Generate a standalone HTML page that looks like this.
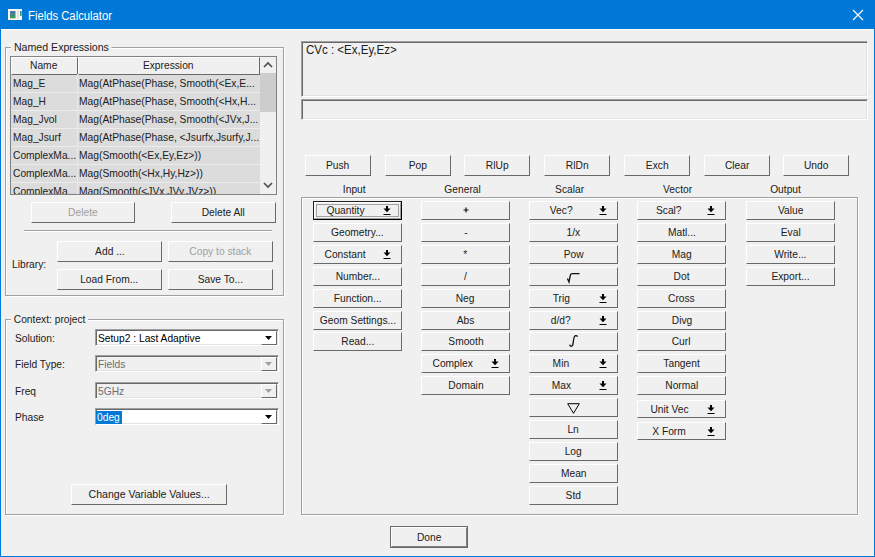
<!DOCTYPE html>
<html><head><meta charset="utf-8"><style>
html,body{margin:0;padding:0;width:875px;height:557px;overflow:hidden;background:#f0f0f0}
body{position:relative;font-family:"Liberation Sans",sans-serif;font-size:11px}
.a{position:absolute;box-sizing:border-box}
.t{position:absolute;white-space:nowrap}
svg.a{display:block}
</style></head><body>
<div class="a" style="left:0px;top:0px;width:875px;height:557px;background:#f0f0f0;"></div>
<div class="a" style="left:0px;top:0px;width:875px;height:29px;background:#0078d7;"></div>
<div class="a" style="left:0px;top:29px;width:1px;height:528px;background:#0078d7;"></div>
<div class="a" style="left:874px;top:29px;width:1px;height:528px;background:#0078d7;"></div>
<div class="a" style="left:0px;top:556px;width:875px;height:1px;background:#0078d7;"></div>
<div class="a" style="left:1px;top:29px;width:873px;height:1px;background:#fff;"></div>
<svg class="a" style="left:8px;top:9px" width="14" height="11" viewBox="0 0 14 11"><defs><linearGradient id="g1" x1="0" y1="0" x2="0" y2="1"><stop offset="0" stop-color="#4a72b0"/><stop offset="1" stop-color="#3aa04a"/></linearGradient></defs><rect x="0" y="0" width="14" height="11" fill="#faf6f2"/><rect x="2" y="2" width="5.5" height="7.3" fill="url(#g1)"/><rect x="9" y="2" width="2" height="7.3" fill="#e2e2e2"/><rect x="12" y="2" width="1.6" height="5" fill="url(#g1)"/></svg>
<div class="t" style="left:28.00px;top:8.8px;font-size:12px;line-height:15px;color:#fff;transform:scaleX(0.94);transform-origin:left;">Fields Calculator</div>
<svg class="a" style="left:852px;top:9px" width="12" height="12" viewBox="0 0 12 12"><path d="M1 1 L11 11 M11 1 L1 11" stroke="#fff" stroke-width="1.1"/></svg>
<div class="a" style="left:6px;top:48px;width:279px;height:249px;border:1px solid #fff;"></div>
<div class="a" style="left:5px;top:47px;width:279px;height:249px;border:1px solid #a0a0a0;"></div>
<div class="t" style="left:14.00px;top:41px;font-size:11px;line-height:13px;color:#202020;transform:scaleX(0.965);transform-origin:left;background:#f0f0f0;padding:0 3px;margin-left:-3px;">Named Expressions</div>
<div class="a" style="left:10px;top:56px;width:267px;height:139px;background:#dcdcdc;border:1px solid #828282;"></div>
<div class="a" style="left:11px;top:57px;width:67px;height:18px;background:#f0f0f0;border-top:1px solid #fff;border-left:1px solid #fff;border-right:1px solid #696969;border-bottom:1px solid #696969;"></div>
<div class="a" style="left:78px;top:57px;width:182px;height:18px;background:#f0f0f0;border-top:1px solid #fff;border-left:1px solid #fff;border-right:1px solid #696969;border-bottom:1px solid #696969;"></div>
<div class="t" style="left:29.33px;top:59px;font-size:11px;line-height:13px;color:#202020;transform:scaleX(0.93);transform-origin:center;">Name</div>
<div class="t" style="left:140.78px;top:59px;font-size:11px;line-height:13px;color:#202020;transform:scaleX(0.93);transform-origin:center;">Expression</div>
<div class="a" style="left:11px;top:74px;width:249px;height:120px;overflow:hidden">
<div class="t" style="left:2.00px;top:2.6999999999999993px;font-size:11px;line-height:13px;color:#202020;transform:scaleX(0.93);transform-origin:left;">Mag_E</div>
<div class="t" style="left:68.00px;top:2.6999999999999993px;font-size:11px;line-height:13px;color:#202020;transform:scaleX(0.935);transform-origin:left;">Mag(AtPhase(Phase, Smooth(&lt;Ex,E...</div>
<div class="a" style="left:0;top:18px;width:249px;height:1px;background:#ececec"></div>
<div class="t" style="left:2.00px;top:20.7px;font-size:11px;line-height:13px;color:#202020;transform:scaleX(0.93);transform-origin:left;">Mag_H</div>
<div class="t" style="left:68.00px;top:20.7px;font-size:11px;line-height:13px;color:#202020;transform:scaleX(0.935);transform-origin:left;">Mag(AtPhase(Phase, Smooth(&lt;Hx,H...</div>
<div class="a" style="left:0;top:36px;width:249px;height:1px;background:#ececec"></div>
<div class="t" style="left:2.00px;top:38.7px;font-size:11px;line-height:13px;color:#202020;transform:scaleX(0.93);transform-origin:left;">Mag_Jvol</div>
<div class="t" style="left:68.00px;top:38.7px;font-size:11px;line-height:13px;color:#202020;transform:scaleX(0.935);transform-origin:left;">Mag(AtPhase(Phase, Smooth(&lt;JVx,J...</div>
<div class="a" style="left:0;top:54px;width:249px;height:1px;background:#ececec"></div>
<div class="t" style="left:2.00px;top:56.7px;font-size:11px;line-height:13px;color:#202020;transform:scaleX(0.93);transform-origin:left;">Mag_Jsurf</div>
<div class="t" style="left:68.00px;top:56.7px;font-size:11px;line-height:13px;color:#202020;transform:scaleX(0.935);transform-origin:left;">Mag(AtPhase(Phase, &lt;Jsurfx,Jsurfy,J...</div>
<div class="a" style="left:0;top:72px;width:249px;height:1px;background:#ececec"></div>
<div class="t" style="left:2.00px;top:74.7px;font-size:11px;line-height:13px;color:#202020;transform:scaleX(0.93);transform-origin:left;">ComplexMa...</div>
<div class="t" style="left:68.00px;top:74.7px;font-size:11px;line-height:13px;color:#202020;transform:scaleX(0.935);transform-origin:left;">Mag(Smooth(&lt;Ex,Ey,Ez&gt;))</div>
<div class="a" style="left:0;top:90px;width:249px;height:1px;background:#ececec"></div>
<div class="t" style="left:2.00px;top:92.7px;font-size:11px;line-height:13px;color:#202020;transform:scaleX(0.93);transform-origin:left;">ComplexMa...</div>
<div class="t" style="left:68.00px;top:92.7px;font-size:11px;line-height:13px;color:#202020;transform:scaleX(0.935);transform-origin:left;">Mag(Smooth(&lt;Hx,Hy,Hz&gt;))</div>
<div class="a" style="left:0;top:108px;width:249px;height:1px;background:#ececec"></div>
<div class="t" style="left:2.00px;top:110.7px;font-size:11px;line-height:13px;color:#202020;transform:scaleX(0.93);transform-origin:left;">ComplexMa...</div>
<div class="t" style="left:68.00px;top:110.7px;font-size:11px;line-height:13px;color:#202020;transform:scaleX(0.935);transform-origin:left;">Mag(Smooth(&lt;JVx,JVy,JVz&gt;))</div>
<div class="a" style="left:66px;top:0;width:1px;height:120px;background:#e8e8e8"></div>
</div>
<div class="a" style="left:260px;top:57px;width:16px;height:137px;background:#f0f0f0;"></div>
<div class="a" style="left:260px;top:73px;width:16px;height:39px;background:#cdcdcd;"></div>
<svg class="a" style="left:263px;top:61px" width="10" height="8" viewBox="0 0 10 8"><path d="M1 6 L5 2 L9 6" stroke="#505050" stroke-width="1.7" fill="none"/></svg>
<svg class="a" style="left:263px;top:181px" width="10" height="8" viewBox="0 0 10 8"><path d="M1 2 L5 6 L9 2" stroke="#505050" stroke-width="1.7" fill="none"/></svg>
<div class="a" style="left:31px;top:202px;width:104px;height:21px;border-top:1px solid #fff;border-left:1px solid #fff;border-right:1px solid #696969;border-bottom:1px solid #696969;"></div>
<div class="t" style="left:67.09px;top:205.5px;font-size:11px;line-height:13px;color:#a0a0a0;transform:scaleX(0.93);transform-origin:center;">Delete</div>
<div class="a" style="left:171px;top:202px;width:105px;height:21px;border-top:1px solid #fff;border-left:1px solid #fff;border-right:1px solid #696969;border-bottom:1px solid #696969;"></div>
<div class="t" style="left:200.26px;top:205.5px;font-size:11px;line-height:13px;color:#202020;transform:scaleX(0.93);transform-origin:center;">Delete All</div>
<div class="a" style="left:24px;top:230px;width:248px;height:1px;background:#a0a0a0;"></div>
<div class="a" style="left:24px;top:231px;width:248px;height:1px;background:#fff;"></div>
<div class="t" style="left:12.00px;top:257.6px;font-size:11px;line-height:13px;color:#202020;transform:scaleX(0.93);transform-origin:left;">Library:</div>
<div class="a" style="left:57px;top:241px;width:105px;height:21px;border-top:1px solid #fff;border-left:1px solid #fff;border-right:1px solid #696969;border-bottom:1px solid #696969;"></div>
<div class="t" style="left:93.58px;top:244.5px;font-size:11px;line-height:13px;color:#202020;transform:scaleX(0.93);transform-origin:center;">Add ...</div>
<div class="a" style="left:168px;top:241px;width:105px;height:21px;border-top:1px solid #fff;border-left:1px solid #fff;border-right:1px solid #696969;border-bottom:1px solid #696969;"></div>
<div class="t" style="left:187.16px;top:244.5px;font-size:11px;line-height:13px;color:#a0a0a0;transform:scaleX(0.93);transform-origin:center;">Copy to stack</div>
<div class="a" style="left:57px;top:269px;width:105px;height:21px;border-top:1px solid #fff;border-left:1px solid #fff;border-right:1px solid #696969;border-bottom:1px solid #696969;"></div>
<div class="t" style="left:78.30px;top:272.5px;font-size:11px;line-height:13px;color:#202020;transform:scaleX(0.93);transform-origin:center;">Load From...</div>
<div class="a" style="left:168px;top:269px;width:105px;height:21px;border-top:1px solid #fff;border-left:1px solid #fff;border-right:1px solid #696969;border-bottom:1px solid #696969;"></div>
<div class="t" style="left:196.12px;top:272.5px;font-size:11px;line-height:13px;color:#202020;transform:scaleX(0.93);transform-origin:center;">Save To...</div>
<div class="a" style="left:6px;top:320px;width:279px;height:196px;border:1px solid #fff;"></div>
<div class="a" style="left:5px;top:319px;width:279px;height:196px;border:1px solid #a0a0a0;"></div>
<div class="t" style="left:14.00px;top:313px;font-size:11px;line-height:13px;color:#202020;transform:scaleX(0.93);transform-origin:left;background:#f0f0f0;padding:0 3px;margin-left:-3px;">Context: project</div>
<div class="t" style="left:14.50px;top:331.5px;font-size:11px;line-height:13px;color:#202020;transform:scaleX(0.93);transform-origin:left;">Solution:</div>
<div class="a" style="left:95px;top:329px;width:184px;height:17px;background:#fff;border-top:1px solid #a0a0a0;border-left:1px solid #a0a0a0;border-right:1px solid #fff;border-bottom:1px solid #fff;box-shadow:inset 1px 1px #696969, inset -1px -1px #e3e3e3;"></div>
<div class="a" style="left:261px;top:331px;width:16px;height:14px;border-top:1px solid #fff;border-left:1px solid #fff;border-right:1px solid #696969;border-bottom:1px solid #696969;"></div>
<svg class="a" style="left:265px;top:336px" width="7" height="4" viewBox="0 0 7 4"><path d="M0 0 H7 L3.5 4 Z" fill="#000"/></svg>
<div class="t" style="left:98.00px;top:331.5px;font-size:11px;line-height:13px;color:#000;transform:scaleX(0.93);transform-origin:left;">Setup2 : Last Adaptive</div>
<div class="t" style="left:14.50px;top:357.5px;font-size:11px;line-height:13px;color:#202020;transform:scaleX(0.93);transform-origin:left;">Field Type:</div>
<div class="a" style="left:95px;top:355px;width:184px;height:17px;background:#f0f0f0;border-top:1px solid #a0a0a0;border-left:1px solid #a0a0a0;border-right:1px solid #fff;border-bottom:1px solid #fff;box-shadow:inset 1px 1px #696969, inset -1px -1px #e3e3e3;"></div>
<div class="a" style="left:261px;top:357px;width:16px;height:14px;border-top:1px solid #fff;border-left:1px solid #fff;border-right:1px solid #696969;border-bottom:1px solid #696969;"></div>
<svg class="a" style="left:265px;top:362px" width="7" height="4" viewBox="0 0 7 4"><path d="M0 0 H7 L3.5 4 Z" fill="#a0a0a0"/></svg>
<div class="t" style="left:98.00px;top:357.5px;font-size:11px;line-height:13px;color:#6d6d6d;transform:scaleX(0.93);transform-origin:left;">Fields</div>
<div class="t" style="left:14.50px;top:384.5px;font-size:11px;line-height:13px;color:#202020;transform:scaleX(0.93);transform-origin:left;">Freq</div>
<div class="a" style="left:95px;top:382px;width:184px;height:17px;background:#f0f0f0;border-top:1px solid #a0a0a0;border-left:1px solid #a0a0a0;border-right:1px solid #fff;border-bottom:1px solid #fff;box-shadow:inset 1px 1px #696969, inset -1px -1px #e3e3e3;"></div>
<div class="a" style="left:261px;top:384px;width:16px;height:14px;border-top:1px solid #fff;border-left:1px solid #fff;border-right:1px solid #696969;border-bottom:1px solid #696969;"></div>
<svg class="a" style="left:265px;top:389px" width="7" height="4" viewBox="0 0 7 4"><path d="M0 0 H7 L3.5 4 Z" fill="#a0a0a0"/></svg>
<div class="t" style="left:98.00px;top:384.5px;font-size:11px;line-height:13px;color:#6d6d6d;transform:scaleX(0.93);transform-origin:left;">5GHz</div>
<div class="t" style="left:14.50px;top:410.5px;font-size:11px;line-height:13px;color:#202020;transform:scaleX(0.93);transform-origin:left;">Phase</div>
<div class="a" style="left:95px;top:408px;width:184px;height:17px;background:#fff;border-top:1px solid #a0a0a0;border-left:1px solid #a0a0a0;border-right:1px solid #fff;border-bottom:1px solid #fff;box-shadow:inset 1px 1px #696969, inset -1px -1px #e3e3e3;"></div>
<div class="a" style="left:261px;top:410px;width:16px;height:14px;border-top:1px solid #fff;border-left:1px solid #fff;border-right:1px solid #696969;border-bottom:1px solid #696969;"></div>
<svg class="a" style="left:265px;top:415px" width="7" height="4" viewBox="0 0 7 4"><path d="M0 0 H7 L3.5 4 Z" fill="#000"/></svg>
<div class="a" style="left:96px;top:411px;width:26px;height:13px;background:#0078d7;"></div>
<div class="t" style="left:97.00px;top:410.5px;font-size:11px;line-height:13px;color:#fff;transform:scaleX(0.93);transform-origin:left;">0deg</div>
<div class="a" style="left:71px;top:484px;width:156px;height:21px;border-top:1px solid #fff;border-left:1px solid #fff;border-right:1px solid #696969;border-bottom:1px solid #696969;"></div>
<div class="t" style="left:85.86px;top:487.5px;font-size:11px;line-height:13px;color:#202020;transform:scaleX(0.96);transform-origin:center;">Change Variable Values...</div>
<div class="a" style="left:301px;top:41px;width:567px;height:56px;background:#f0f0f0;border-top:1px solid #a0a0a0;border-left:1px solid #a0a0a0;border-right:1px solid #fff;border-bottom:1px solid #fff;box-shadow:inset 1px 1px #696969, inset -1px -1px #e3e3e3;"></div>
<div class="t" style="left:306.00px;top:43.3px;font-size:12px;line-height:15px;color:#202020;transform:scaleX(0.96);transform-origin:left;">CVc : &lt;Ex,Ey,Ez&gt;</div>
<div class="a" style="left:301px;top:99px;width:567px;height:21px;background:#f0f0f0;border-top:1px solid #a0a0a0;border-left:1px solid #a0a0a0;border-right:1px solid #fff;border-bottom:1px solid #fff;box-shadow:inset 1px 1px #696969, inset -1px -1px #e3e3e3;"></div>
<div class="a" style="left:305px;top:155px;width:66px;height:21px;border-top:1px solid #fff;border-left:1px solid #fff;border-right:1px solid #696969;border-bottom:1px solid #696969;"></div>
<div class="t" style="left:325.45px;top:158.6px;font-size:11px;line-height:13px;color:#202020;transform:scaleX(0.93);transform-origin:center;">Push</div>
<div class="a" style="left:385px;top:155px;width:66px;height:21px;border-top:1px solid #fff;border-left:1px solid #fff;border-right:1px solid #696969;border-bottom:1px solid #696969;"></div>
<div class="t" style="left:408.20px;top:158.6px;font-size:11px;line-height:13px;color:#202020;transform:scaleX(0.93);transform-origin:center;">Pop</div>
<div class="a" style="left:464px;top:155px;width:66px;height:21px;border-top:1px solid #fff;border-left:1px solid #fff;border-right:1px solid #696969;border-bottom:1px solid #696969;"></div>
<div class="t" style="left:484.78px;top:158.6px;font-size:11px;line-height:13px;color:#202020;transform:scaleX(0.93);transform-origin:center;">RlUp</div>
<div class="a" style="left:544px;top:155px;width:66px;height:21px;border-top:1px solid #fff;border-left:1px solid #fff;border-right:1px solid #696969;border-bottom:1px solid #696969;"></div>
<div class="t" style="left:564.78px;top:158.6px;font-size:11px;line-height:13px;color:#202020;transform:scaleX(0.93);transform-origin:center;">RlDn</div>
<div class="a" style="left:624px;top:155px;width:66px;height:21px;border-top:1px solid #fff;border-left:1px solid #fff;border-right:1px solid #696969;border-bottom:1px solid #696969;"></div>
<div class="t" style="left:644.77px;top:158.6px;font-size:11px;line-height:13px;color:#202020;transform:scaleX(0.93);transform-origin:center;">Exch</div>
<div class="a" style="left:704px;top:155px;width:66px;height:21px;border-top:1px solid #fff;border-left:1px solid #fff;border-right:1px solid #696969;border-bottom:1px solid #696969;"></div>
<div class="t" style="left:723.86px;top:158.6px;font-size:11px;line-height:13px;color:#202020;transform:scaleX(0.93);transform-origin:center;">Clear</div>
<div class="a" style="left:783px;top:155px;width:66px;height:21px;border-top:1px solid #fff;border-left:1px solid #fff;border-right:1px solid #696969;border-bottom:1px solid #696969;"></div>
<div class="t" style="left:802.84px;top:158.6px;font-size:11px;line-height:13px;color:#202020;transform:scaleX(0.93);transform-origin:center;">Undo</div>
<div class="t" style="left:342.25px;top:182.7px;font-size:11px;line-height:13px;color:#202020;transform:scaleX(0.93);transform-origin:center;">Input</div>
<div class="t" style="left:442.62px;top:182.7px;font-size:11px;line-height:13px;color:#202020;transform:scaleX(0.93);transform-origin:center;">General</div>
<div class="t" style="left:554.31px;top:182.7px;font-size:11px;line-height:13px;color:#202020;transform:scaleX(0.93);transform-origin:center;">Scalar</div>
<div class="t" style="left:662.00px;top:182.7px;font-size:11px;line-height:13px;color:#202020;transform:scaleX(0.93);transform-origin:center;">Vector</div>
<div class="t" style="left:768.77px;top:182.7px;font-size:11px;line-height:13px;color:#202020;transform:scaleX(0.93);transform-origin:center;">Output</div>
<div class="a" style="left:302px;top:198px;width:557px;height:318px;border:1px solid #fff;"></div>
<div class="a" style="left:301px;top:197px;width:557px;height:318px;border:1px solid #a0a0a0;"></div>
<div class="a" style="left:313px;top:201px;width:89px;height:19px;border:1px solid #202020;border-right-color:#000;border-bottom-color:#000;"></div>
<div class="a" style="left:314px;top:202px;width:87px;height:17px;border-top:1px solid #fff;border-left:1px solid #fff;border-right:1px solid #a0a0a0;border-bottom:1px solid #a0a0a0;"></div>
<svg class="a" style="left:316px;top:204px" width="83" height="13"><rect x="0.5" y="0.5" width="82" height="12" fill="none" stroke="#555" stroke-width="1" stroke-dasharray="1 1"/></svg>
<div class="t" style="left:324.50px;top:204px;font-size:11px;line-height:13px;color:#202020;transform:scaleX(0.93);transform-origin:center;">Quantity</div>
<svg class="a" style="left:383px;top:206px" width="8" height="10" viewBox="0 0 8 10"><rect x="3" y="0" width="2" height="3" fill="#000"/><path d="M0.5 2.5 H7.5 L4 6.2 Z" fill="#000"/><rect x="0.5" y="8" width="7" height="1" fill="#000"/></svg>
<div class="a" style="left:313px;top:223px;width:89px;height:19px;border-top:1px solid #fff;border-left:1px solid #fff;border-right:1px solid #696969;border-bottom:1px solid #696969;"></div>
<div class="t" style="left:329.16px;top:226px;font-size:11px;line-height:13px;color:#202020;transform:scaleX(0.93);transform-origin:center;">Geometry...</div>
<div class="a" style="left:313px;top:245px;width:89px;height:19px;border-top:1px solid #fff;border-left:1px solid #fff;border-right:1px solid #696969;border-bottom:1px solid #696969;"></div>
<div class="t" style="left:322.97px;top:248px;font-size:11px;line-height:13px;color:#202020;transform:scaleX(0.93);transform-origin:center;">Constant</div>
<svg class="a" style="left:383px;top:250px" width="8" height="10" viewBox="0 0 8 10"><rect x="3" y="0" width="2" height="3" fill="#000"/><path d="M0.5 2.5 H7.5 L4 6.2 Z" fill="#000"/><rect x="0.5" y="8" width="7" height="1" fill="#000"/></svg>
<div class="a" style="left:313px;top:267px;width:89px;height:19px;border-top:1px solid #fff;border-left:1px solid #fff;border-right:1px solid #696969;border-bottom:1px solid #696969;"></div>
<div class="t" style="left:333.65px;top:270px;font-size:11px;line-height:13px;color:#202020;transform:scaleX(0.93);transform-origin:center;">Number...</div>
<div class="a" style="left:313px;top:289px;width:89px;height:19px;border-top:1px solid #fff;border-left:1px solid #fff;border-right:1px solid #696969;border-bottom:1px solid #696969;"></div>
<div class="t" style="left:331.80px;top:292px;font-size:11px;line-height:13px;color:#202020;transform:scaleX(0.93);transform-origin:center;">Function...</div>
<div class="a" style="left:313px;top:311px;width:89px;height:19px;border-top:1px solid #fff;border-left:1px solid #fff;border-right:1px solid #696969;border-bottom:1px solid #696969;"></div>
<div class="t" style="left:316.50px;top:314px;font-size:11px;line-height:13px;color:#202020;transform:scaleX(0.93);transform-origin:center;">Geom Settings...</div>
<div class="a" style="left:313px;top:332px;width:89px;height:19px;border-top:1px solid #fff;border-left:1px solid #fff;border-right:1px solid #696969;border-bottom:1px solid #696969;"></div>
<div class="t" style="left:339.75px;top:335px;font-size:11px;line-height:13px;color:#202020;transform:scaleX(0.93);transform-origin:center;">Read...</div>
<div class="a" style="left:421px;top:201px;width:89px;height:19px;border-top:1px solid #fff;border-left:1px solid #fff;border-right:1px solid #696969;border-bottom:1px solid #696969;"></div>
<svg class="a" style="left:463px;top:207px" width="6" height="6" viewBox="0 0 6 6"><path d="M0.5 3 H5.5 M3 0.5 V5.5" stroke="#111" stroke-width="1.2"/></svg>
<div class="a" style="left:421px;top:223px;width:89px;height:19px;border-top:1px solid #fff;border-left:1px solid #fff;border-right:1px solid #696969;border-bottom:1px solid #696969;"></div>
<div class="t" style="left:463.67px;top:226px;font-size:11px;line-height:13px;color:#202020;transform:scaleX(0.93);transform-origin:center;">-</div>
<div class="a" style="left:421px;top:245px;width:89px;height:19px;border-top:1px solid #fff;border-left:1px solid #fff;border-right:1px solid #696969;border-bottom:1px solid #696969;"></div>
<div class="t" style="left:463.36px;top:248px;font-size:11px;line-height:13px;color:#202020;transform:scaleX(0.93);transform-origin:center;">*</div>
<div class="a" style="left:421px;top:267px;width:89px;height:19px;border-top:1px solid #fff;border-left:1px solid #fff;border-right:1px solid #696969;border-bottom:1px solid #696969;"></div>
<div class="t" style="left:463.97px;top:270px;font-size:11px;line-height:13px;color:#202020;transform:scaleX(0.93);transform-origin:center;">/</div>
<div class="a" style="left:421px;top:289px;width:89px;height:19px;border-top:1px solid #fff;border-left:1px solid #fff;border-right:1px solid #696969;border-bottom:1px solid #696969;"></div>
<div class="t" style="left:455.41px;top:292px;font-size:11px;line-height:13px;color:#202020;transform:scaleX(0.93);transform-origin:center;">Neg</div>
<div class="a" style="left:421px;top:311px;width:89px;height:19px;border-top:1px solid #fff;border-left:1px solid #fff;border-right:1px solid #696969;border-bottom:1px solid #696969;"></div>
<div class="t" style="left:456.02px;top:314px;font-size:11px;line-height:13px;color:#202020;transform:scaleX(0.93);transform-origin:center;">Abs</div>
<div class="a" style="left:421px;top:332px;width:89px;height:19px;border-top:1px solid #fff;border-left:1px solid #fff;border-right:1px solid #696969;border-bottom:1px solid #696969;"></div>
<div class="t" style="left:446.53px;top:335px;font-size:11px;line-height:13px;color:#202020;transform:scaleX(0.93);transform-origin:center;">Smooth</div>
<div class="a" style="left:421px;top:354px;width:89px;height:19px;border-top:1px solid #fff;border-left:1px solid #fff;border-right:1px solid #696969;border-bottom:1px solid #696969;"></div>
<div class="t" style="left:431.30px;top:357px;font-size:11px;line-height:13px;color:#202020;transform:scaleX(0.93);transform-origin:center;">Complex</div>
<svg class="a" style="left:491px;top:359px" width="8" height="10" viewBox="0 0 8 10"><rect x="3" y="0" width="2" height="3" fill="#000"/><path d="M0.5 2.5 H7.5 L4 6.2 Z" fill="#000"/><rect x="0.5" y="8" width="7" height="1" fill="#000"/></svg>
<div class="a" style="left:421px;top:376px;width:89px;height:19px;border-top:1px solid #fff;border-left:1px solid #fff;border-right:1px solid #696969;border-bottom:1px solid #696969;"></div>
<div class="t" style="left:446.55px;top:379px;font-size:11px;line-height:13px;color:#202020;transform:scaleX(0.93);transform-origin:center;">Domain</div>
<div class="a" style="left:529px;top:201px;width:89px;height:19px;border-top:1px solid #fff;border-left:1px solid #fff;border-right:1px solid #696969;border-bottom:1px solid #696969;"></div>
<div class="t" style="left:548.76px;top:204px;font-size:11px;line-height:13px;color:#202020;transform:scaleX(0.93);transform-origin:center;">Vec?</div>
<svg class="a" style="left:599px;top:206px" width="8" height="10" viewBox="0 0 8 10"><rect x="3" y="0" width="2" height="3" fill="#000"/><path d="M0.5 2.5 H7.5 L4 6.2 Z" fill="#000"/><rect x="0.5" y="8" width="7" height="1" fill="#000"/></svg>
<div class="a" style="left:529px;top:223px;width:89px;height:19px;border-top:1px solid #fff;border-left:1px solid #fff;border-right:1px solid #696969;border-bottom:1px solid #696969;"></div>
<div class="t" style="left:566.16px;top:226px;font-size:11px;line-height:13px;color:#202020;transform:scaleX(0.93);transform-origin:center;">1/x</div>
<div class="a" style="left:529px;top:245px;width:89px;height:19px;border-top:1px solid #fff;border-left:1px solid #fff;border-right:1px solid #696969;border-bottom:1px solid #696969;"></div>
<div class="t" style="left:562.80px;top:248px;font-size:11px;line-height:13px;color:#202020;transform:scaleX(0.93);transform-origin:center;">Pow</div>
<div class="a" style="left:529px;top:267px;width:89px;height:19px;border-top:1px solid #fff;border-left:1px solid #fff;border-right:1px solid #696969;border-bottom:1px solid #696969;"></div>
<svg class="a" style="left:566px;top:270px" width="15" height="14" viewBox="0 0 15 14"><path d="M1.4 8.4 L3 12 L4.4 5 Q4.8 3.6 6.2 3.6 H13.6" stroke="#111" stroke-width="1.3" fill="none"/></svg>
<div class="a" style="left:529px;top:289px;width:89px;height:19px;border-top:1px solid #fff;border-left:1px solid #fff;border-right:1px solid #696969;border-bottom:1px solid #696969;"></div>
<div class="t" style="left:551.73px;top:292px;font-size:11px;line-height:13px;color:#202020;transform:scaleX(0.93);transform-origin:center;">Trig</div>
<svg class="a" style="left:599px;top:294px" width="8" height="10" viewBox="0 0 8 10"><rect x="3" y="0" width="2" height="3" fill="#000"/><path d="M0.5 2.5 H7.5 L4 6.2 Z" fill="#000"/><rect x="0.5" y="8" width="7" height="1" fill="#000"/></svg>
<div class="a" style="left:529px;top:311px;width:89px;height:19px;border-top:1px solid #fff;border-left:1px solid #fff;border-right:1px solid #696969;border-bottom:1px solid #696969;"></div>
<div class="t" style="left:550.28px;top:314px;font-size:11px;line-height:13px;color:#202020;transform:scaleX(0.93);transform-origin:center;">d/d?</div>
<svg class="a" style="left:599px;top:316px" width="8" height="10" viewBox="0 0 8 10"><rect x="3" y="0" width="2" height="3" fill="#000"/><path d="M0.5 2.5 H7.5 L4 6.2 Z" fill="#000"/><rect x="0.5" y="8" width="7" height="1" fill="#000"/></svg>
<div class="a" style="left:529px;top:332px;width:89px;height:19px;border-top:1px solid #fff;border-left:1px solid #fff;border-right:1px solid #696969;border-bottom:1px solid #696969;"></div>
<svg class="a" style="left:568px;top:334px" width="12" height="15" viewBox="0 0 12 15"><path d="M9.6 2.6 Q8.6 1.2 7.3 1.7 Q6.1 2.3 5.6 5.5 L5 10 Q4.5 12.4 3.2 12.3 Q2 12.1 1.6 10.6" stroke="#111" stroke-width="1.3" fill="none"/></svg>
<div class="a" style="left:529px;top:354px;width:89px;height:19px;border-top:1px solid #fff;border-left:1px solid #fff;border-right:1px solid #696969;border-bottom:1px solid #696969;"></div>
<div class="t" style="left:552.14px;top:357px;font-size:11px;line-height:13px;color:#202020;transform:scaleX(0.93);transform-origin:center;">Min</div>
<svg class="a" style="left:599px;top:359px" width="8" height="10" viewBox="0 0 8 10"><rect x="3" y="0" width="2" height="3" fill="#000"/><path d="M0.5 2.5 H7.5 L4 6.2 Z" fill="#000"/><rect x="0.5" y="8" width="7" height="1" fill="#000"/></svg>
<div class="a" style="left:529px;top:376px;width:89px;height:19px;border-top:1px solid #fff;border-left:1px solid #fff;border-right:1px solid #696969;border-bottom:1px solid #696969;"></div>
<div class="t" style="left:550.61px;top:379px;font-size:11px;line-height:13px;color:#202020;transform:scaleX(0.93);transform-origin:center;">Max</div>
<svg class="a" style="left:599px;top:381px" width="8" height="10" viewBox="0 0 8 10"><rect x="3" y="0" width="2" height="3" fill="#000"/><path d="M0.5 2.5 H7.5 L4 6.2 Z" fill="#000"/><rect x="0.5" y="8" width="7" height="1" fill="#000"/></svg>
<div class="a" style="left:529px;top:398px;width:89px;height:19px;border-top:1px solid #fff;border-left:1px solid #fff;border-right:1px solid #696969;border-bottom:1px solid #696969;"></div>
<svg class="a" style="left:567px;top:403px" width="13" height="11" viewBox="0 0 13 11"><path d="M0.7 0.7 H12.3 L6.5 10.3 Z" stroke="#000" stroke-width="1" fill="none"/></svg>
<div class="a" style="left:529px;top:420px;width:89px;height:19px;border-top:1px solid #fff;border-left:1px solid #fff;border-right:1px solid #696969;border-bottom:1px solid #696969;"></div>
<div class="t" style="left:567.38px;top:423px;font-size:11px;line-height:13px;color:#202020;transform:scaleX(0.93);transform-origin:center;">Ln</div>
<div class="a" style="left:529px;top:442px;width:89px;height:19px;border-top:1px solid #fff;border-left:1px solid #fff;border-right:1px solid #696969;border-bottom:1px solid #696969;"></div>
<div class="t" style="left:564.31px;top:445px;font-size:11px;line-height:13px;color:#202020;transform:scaleX(0.93);transform-origin:center;">Log</div>
<div class="a" style="left:529px;top:464px;width:89px;height:19px;border-top:1px solid #fff;border-left:1px solid #fff;border-right:1px solid #696969;border-bottom:1px solid #696969;"></div>
<div class="t" style="left:559.73px;top:467px;font-size:11px;line-height:13px;color:#202020;transform:scaleX(0.93);transform-origin:center;">Mean</div>
<div class="a" style="left:529px;top:486px;width:89px;height:19px;border-top:1px solid #fff;border-left:1px solid #fff;border-right:1px solid #696969;border-bottom:1px solid #696969;"></div>
<div class="t" style="left:565.23px;top:489px;font-size:11px;line-height:13px;color:#202020;transform:scaleX(0.93);transform-origin:center;">Std</div>
<div class="a" style="left:637px;top:201px;width:89px;height:19px;border-top:1px solid #fff;border-left:1px solid #fff;border-right:1px solid #696969;border-bottom:1px solid #696969;"></div>
<div class="t" style="left:655.23px;top:204px;font-size:11px;line-height:13px;color:#202020;transform:scaleX(0.93);transform-origin:center;">Scal?</div>
<svg class="a" style="left:707px;top:206px" width="8" height="10" viewBox="0 0 8 10"><rect x="3" y="0" width="2" height="3" fill="#000"/><path d="M0.5 2.5 H7.5 L4 6.2 Z" fill="#000"/><rect x="0.5" y="8" width="7" height="1" fill="#000"/></svg>
<div class="a" style="left:637px;top:223px;width:89px;height:19px;border-top:1px solid #fff;border-left:1px solid #fff;border-right:1px solid #696969;border-bottom:1px solid #696969;"></div>
<div class="t" style="left:666.52px;top:226px;font-size:11px;line-height:13px;color:#202020;transform:scaleX(0.93);transform-origin:center;">Matl...</div>
<div class="a" style="left:637px;top:245px;width:89px;height:19px;border-top:1px solid #fff;border-left:1px solid #fff;border-right:1px solid #696969;border-bottom:1px solid #696969;"></div>
<div class="t" style="left:670.80px;top:248px;font-size:11px;line-height:13px;color:#202020;transform:scaleX(0.93);transform-origin:center;">Mag</div>
<div class="a" style="left:637px;top:267px;width:89px;height:19px;border-top:1px solid #fff;border-left:1px solid #fff;border-right:1px solid #696969;border-bottom:1px solid #696969;"></div>
<div class="t" style="left:672.94px;top:270px;font-size:11px;line-height:13px;color:#202020;transform:scaleX(0.93);transform-origin:center;">Dot</div>
<div class="a" style="left:637px;top:289px;width:89px;height:19px;border-top:1px solid #fff;border-left:1px solid #fff;border-right:1px solid #696969;border-bottom:1px solid #696969;"></div>
<div class="t" style="left:667.14px;top:292px;font-size:11px;line-height:13px;color:#202020;transform:scaleX(0.93);transform-origin:center;">Cross</div>
<div class="a" style="left:637px;top:311px;width:89px;height:19px;border-top:1px solid #fff;border-left:1px solid #fff;border-right:1px solid #696969;border-bottom:1px solid #696969;"></div>
<div class="t" style="left:670.50px;top:314px;font-size:11px;line-height:13px;color:#202020;transform:scaleX(0.93);transform-origin:center;">Divg</div>
<div class="a" style="left:637px;top:332px;width:89px;height:19px;border-top:1px solid #fff;border-left:1px solid #fff;border-right:1px solid #696969;border-bottom:1px solid #696969;"></div>
<div class="t" style="left:671.42px;top:335px;font-size:11px;line-height:13px;color:#202020;transform:scaleX(0.93);transform-origin:center;">Curl</div>
<div class="a" style="left:637px;top:354px;width:89px;height:19px;border-top:1px solid #fff;border-left:1px solid #fff;border-right:1px solid #696969;border-bottom:1px solid #696969;"></div>
<div class="t" style="left:661.91px;top:357px;font-size:11px;line-height:13px;color:#202020;transform:scaleX(0.93);transform-origin:center;">Tangent</div>
<div class="a" style="left:637px;top:376px;width:89px;height:19px;border-top:1px solid #fff;border-left:1px solid #fff;border-right:1px solid #696969;border-bottom:1px solid #696969;"></div>
<div class="t" style="left:663.78px;top:379px;font-size:11px;line-height:13px;color:#202020;transform:scaleX(0.93);transform-origin:center;">Normal</div>
<div class="a" style="left:637px;top:400px;width:89px;height:18px;border-top:1px solid #fff;border-left:1px solid #fff;border-right:1px solid #696969;border-bottom:1px solid #696969;"></div>
<div class="t" style="left:648.51px;top:403px;font-size:11px;line-height:13px;color:#202020;transform:scaleX(0.93);transform-origin:center;">Unit Vec</div>
<svg class="a" style="left:707px;top:405px" width="8" height="10" viewBox="0 0 8 10"><rect x="3" y="0" width="2" height="3" fill="#000"/><path d="M0.5 2.5 H7.5 L4 6.2 Z" fill="#000"/><rect x="0.5" y="8" width="7" height="1" fill="#000"/></svg>
<div class="a" style="left:637px;top:422px;width:89px;height:18px;border-top:1px solid #fff;border-left:1px solid #fff;border-right:1px solid #696969;border-bottom:1px solid #696969;"></div>
<div class="t" style="left:650.97px;top:425px;font-size:11px;line-height:13px;color:#202020;transform:scaleX(0.93);transform-origin:center;">X Form</div>
<svg class="a" style="left:707px;top:427px" width="8" height="10" viewBox="0 0 8 10"><rect x="3" y="0" width="2" height="3" fill="#000"/><path d="M0.5 2.5 H7.5 L4 6.2 Z" fill="#000"/><rect x="0.5" y="8" width="7" height="1" fill="#000"/></svg>
<div class="a" style="left:746px;top:201px;width:89px;height:19px;border-top:1px solid #fff;border-left:1px solid #fff;border-right:1px solid #696969;border-bottom:1px solid #696969;"></div>
<div class="t" style="left:776.83px;top:204px;font-size:11px;line-height:13px;color:#202020;transform:scaleX(0.93);transform-origin:center;">Value</div>
<div class="a" style="left:746px;top:223px;width:89px;height:19px;border-top:1px solid #fff;border-left:1px solid #fff;border-right:1px solid #696969;border-bottom:1px solid #696969;"></div>
<div class="t" style="left:779.80px;top:226px;font-size:11px;line-height:13px;color:#202020;transform:scaleX(0.93);transform-origin:center;">Eval</div>
<div class="a" style="left:746px;top:245px;width:89px;height:19px;border-top:1px solid #fff;border-left:1px solid #fff;border-right:1px solid #696969;border-bottom:1px solid #696969;"></div>
<div class="t" style="left:773.18px;top:248px;font-size:11px;line-height:13px;color:#202020;transform:scaleX(0.93);transform-origin:center;">Write...</div>
<div class="a" style="left:746px;top:267px;width:89px;height:19px;border-top:1px solid #fff;border-left:1px solid #fff;border-right:1px solid #696969;border-bottom:1px solid #696969;"></div>
<div class="t" style="left:770.00px;top:270px;font-size:11px;line-height:13px;color:#202020;transform:scaleX(0.93);transform-origin:center;">Export...</div>
<div class="a" style="left:390px;top:526px;width:78px;height:22px;border:1px solid #696969;"></div>
<div class="a" style="left:391px;top:527px;width:76px;height:20px;border-top:1px solid #fff;border-left:1px solid #fff;border-right:1px solid #808080;border-bottom:1px solid #808080;"></div>
<div class="t" style="left:415.84px;top:530.6px;font-size:11px;line-height:13px;color:#202020;transform:scaleX(0.93);transform-origin:center;">Done</div>
</body></html>
